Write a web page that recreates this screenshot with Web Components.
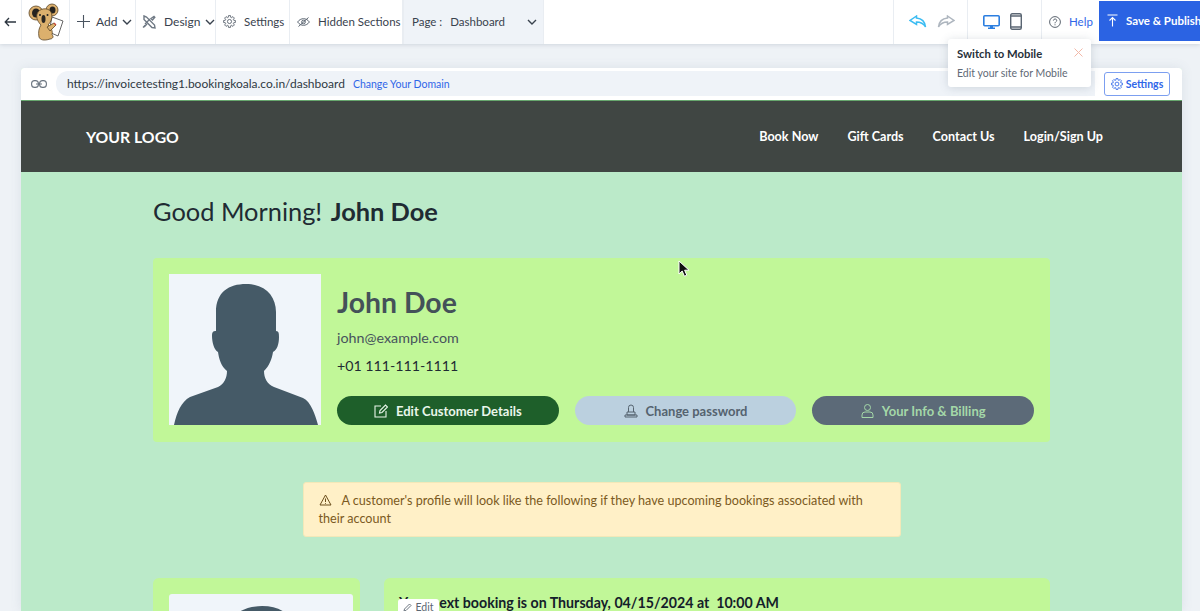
<!DOCTYPE html>
<html>
<head>
<meta charset="utf-8">
<title>Dashboard</title>
<style>
  html, body { margin: 0; height: 611px; overflow: hidden; background: #eef2f6; font-family: Lato, "Liberation Sans", sans-serif; }
</style>
</head>
<body>
<bk-app>
  <bk-toolbar slot="toolbar"></bk-toolbar>
  <bk-tooltip slot="tooltip" heading="Switch to Mobile">Edit your site for Mobile</bk-tooltip>
  <bk-url-bar slot="url" url="https://invoicetesting1.bookingkoala.co.in/dashboard"></bk-url-bar>
  <bk-site-header slot="site"></bk-site-header>
  <bk-dashboard slot="site"></bk-dashboard>
</bk-app>

<script>
const chevron = `<svg width="10" height="6" viewBox="0 0 10 6" fill="none" stroke="#39424e" stroke-width="1.4"><path d="M1 1l4 4 4-4"/></svg>`;

// outline of a gear with 8 teeth, used by both settings buttons
function gear(size, color, sw) {
  let d = '';
  for (let i = 0; i < 8; i++) {
    const a = i * Math.PI / 4;
    const pts = [[-0.3, 8], [-0.17, 11], [0.17, 11], [0.3, 8]];
    pts.forEach(([o, r]) => {
      d += (d ? 'L' : 'M') + (12 + r * Math.sin(a + o)).toFixed(2) + ' ' + (12 - r * Math.cos(a + o)).toFixed(2);
    });
  }
  return `<svg width="${size}" height="${size}" viewBox="0 0 24 24" fill="none" stroke="${color}" stroke-width="${sw}" stroke-linejoin="round"><path d="${d}Z"/><circle cx="12" cy="12" r="3.8"/></svg>`;
}

const avatarPath = 'M5 151C8 138 12 128 21 123L49 113C55 110 58 104 58 97C52 92 50 85 49 78C45 76 43 68 43 62C43 58 44 57 47 57L47 38C47 18 60 10 77 10C96 10 107 22 107 38L107 57C110 57 110 60 110 63C110 70 108 76 104 78C103 85 100 92 95 97C95 104 98 110 105 113L134 124C142 128 146 140 149 151Z';

class App extends HTMLElement {
  constructor() {
    super();
    this.attachShadow({ mode: 'open' });
    this.shadowRoot.innerHTML = `
      <style>
        :host { display: flex; flex-direction: column; position: relative; height: 611px; overflow: hidden; }
        .canvas { flex: 1; min-height: 0; padding: 24px 18px 0 21px; }
        .frame { height: 100%; overflow: hidden; background: #bbeac9; box-shadow: 0 0 12px rgba(90, 110, 130, .12); border-radius: 3px 3px 0 0; }
        ::slotted(bk-tooltip) { position: absolute; left: 948px; top: 39px; }
        .cursor { position: absolute; left: 678px; top: 260px; }
      </style>
      <slot name="toolbar"></slot>
      <div class="canvas">
        <div class="frame">
          <slot name="url"></slot>
          <slot name="site"></slot>
        </div>
      </div>
      <slot name="tooltip"></slot>
      <svg class="cursor" width="13" height="18" viewBox="0 0 13 18"><path d="M1 1v13l3.2-3 2.2 5.2 2.4-1-2.2-5h4.4z" fill="#111" stroke="#fff" stroke-width="1"/></svg>
    `;
  }
}

class Toolbar extends HTMLElement {
  constructor() {
    super();
    this.attachShadow({ mode: 'open' });
    this.shadowRoot.innerHTML = `
      <style>
        :host { display: flex; align-items: stretch; height: 44px; background: #fff; box-shadow: 0 1px 4px rgba(70, 90, 110, .18); position: relative; font-size: 11.5px; color: #39424e; }
        .cell { display: flex; align-items: center; box-sizing: border-box; border-right: 1px solid #e9edf2; white-space: nowrap; padding-bottom: 1px; }
        svg { display: block; flex: none; }
        .back { width: 22px; justify-content: center; }
        .logo { width: 48px; justify-content: center; }
        .add { width: 66px; padding-left: 7px; gap: 6px; font-size: 12px; }
        .add svg:last-child { margin-left: -1px; }
        .design { width: 80px; padding-left: 6px; gap: 8px; font-size: 12px; }
        .design svg:last-child { margin-left: -3px; }
        .settings { width: 74px; padding-left: 7px; gap: 8px; }
        .hidden { width: 113px; padding-left: 7px; gap: 8px; }
        .page { width: 141px; padding: 0 6px 1px 8px; background: #eff3f8; border-left: 1px solid #e9edf2; }
        .page b { font-weight: 400; margin-right: 8px; }
        .page span { flex: 1; }
        .spacer { flex: 1; }
        .history { width: 74px; padding-left: 15px; gap: 10px; }
        .device { width: 74px; padding-left: 15px; gap: 10px; }
        .help { width: 57px; padding-left: 7px; gap: 8px; color: #2f66e8; border-right: 0; font-size: 11.5px; }
        .save { width: 101px; margin: 1px 0 3px; padding-left: 8px; gap: 8px; background: #2b63e3; color: #fff; font-weight: 700; border: 0; overflow: hidden; }
      </style>
      <div class="cell back"><svg width="13" height="10" viewBox="0 0 13 10" fill="none" stroke="#2d3640" stroke-width="1.3"><path d="M12 5H1.2M5 1L1.2 5 5 9"/></svg></div>
      <div class="cell logo">
        <svg width="36" height="38" viewBox="0 0 36 38">
          <path d="M24 14l11 4-5 15-9-4z" fill="#fff" stroke="#555" stroke-width=".9"/>
          <circle cx="8" cy="10" r="7" fill="#dcb06d" stroke="#5a4526" stroke-width=".8"/>
          <circle cx="24" cy="7" r="6" fill="#dcb06d" stroke="#5a4526" stroke-width=".8"/>
          <ellipse cx="8" cy="10" rx="4" ry="4.500" fill="#26231f"/>
          <ellipse cx="24.500" cy="7" rx="3" ry="3.500" fill="#26231f"/>
          <path d="M9 11c2-6 11-7 14-2 2 5 0 10-3 13 3 2 5 6 4 10 2 1 1 4-2 4-6 2-10 1-11-2-1-5 0-9 2-12-3-3-5-7-4-11z" fill="#dcb06d" stroke="#5a4526" stroke-width=".8"/>
          <ellipse cx="15.500" cy="16" rx="2" ry="4" fill="#2b2723"/>
          <circle cx="12" cy="12" r="1" fill="#222"/><circle cx="19.500" cy="12" r="1" fill="#222"/>
          <path d="M19 24l7-4 2 2-6 6z" fill="#dcb06d" stroke="#5a4526" stroke-width=".8"/>
          <path d="M26 20l2 2" stroke="#c9473a" stroke-width="1.200"/>
        </svg>
      </div>
      <div class="cell add"><svg width="13" height="13" viewBox="0 0 13 13" stroke="#4a5460" stroke-width="1.1"><path d="M6.500 0v13M0 6.500h13"/></svg>Add ${chevron}</div>
      <div class="cell design"><svg width="14" height="14" viewBox="0 0 14 14" fill="none" stroke="#6f7984" stroke-width="1.400"><path d="M2 1l2.500 1 8 8 .5 3-3-.5-8-8zM12 1.500l.8.8-2.300 2.700L9 3.500zM5 9l-3 3"/><path d="M1 12.500l2.500-2.500M8 4L3 9"/></svg>Design ${chevron}</div>
      <div class="cell settings">${gear(13, '#4a5460', 1.5)}Settings</div>
      <div class="cell hidden"><svg width="13" height="10" viewBox="0 0 13 10" fill="none" stroke="#5c6672" stroke-width="1"><path d="M.6 5c3-4.400 8.800-4.400 11.800 0-3 4.400-8.800 4.400-11.800 0z"/><circle cx="6.500" cy="5" r="1.800"/><path d="M1.500 9.500L11.500.5"/></svg>Hidden Sections</div>
      <div class="cell page"><b>Page :</b><span>Dashboard</span>${chevron}</div>
      <div class="cell spacer"></div>
      <div class="cell history">
        <svg width="18" height="13" viewBox="0 0 18 13" fill="none" stroke="#3bbcf2" stroke-width="1.500"><path d="M7.500 1L1 5.500 7.500 9.500V7c4 0 7 1.500 9 5-.5-5-3.500-8.500-9-9z"/></svg>
        <svg width="18" height="13" viewBox="0 0 18 13" fill="none" stroke="#aeb6bf" stroke-width="1.500"><path d="M10.500 1L17 5.500 10.500 9.500V7c-4 0-7 1.500-9 5 .5-5 3.500-8.500 9-9z"/></svg>
      </div>
      <div class="cell device">
        <svg width="17" height="14" viewBox="0 0 17 14" fill="none"><rect x=".8" y=".8" width="15.400" height="10" rx="1" stroke="#2b7ee0" stroke-width="1.600"/><path d="M5 12.500h7V14H5z" fill="#2b7ee0"/><path d="M7 11h3v2H7z" fill="#2b7ee0"/></svg>
        <svg width="12" height="17" viewBox="0 0 12 17" fill="none" stroke="#5b6673" stroke-width="1.400"><rect x=".7" y=".7" width="10.600" height="15.600" rx="1.500"/><path d="M.7 3h10.600M.7 14h10.600"/></svg>
      </div>
      <div class="cell help"><svg width="12" height="12" viewBox="0 0 12 12" fill="none" stroke="#4a5460" stroke-width=".9"><circle cx="6" cy="6" r="5.400"/><path d="M4.400 4.600c0-2.100 3.300-2.100 3.300-.1 0 1.300-1.700 1.300-1.700 2.800M6 8.300v1"/></svg>Help</div>
      <div class="cell save"><svg width="11" height="13" viewBox="0 0 11 13" fill="none" stroke="#fff" stroke-width="1.100"><path d="M.5 1h10M5.500 12.500V4M2.500 6.500l3-3 3 3"/></svg>Save &amp; Publish</div>
    `;
  }
}

class Tooltip extends HTMLElement {
  constructor() {
    super();
    this.attachShadow({ mode: 'open' });
    this.shadowRoot.innerHTML = `
      <style>
        :host { display: block; box-sizing: border-box; width: 143px; height: 48px; padding: 8px 9px; background: #fff; border-radius: 3px; box-shadow: 0 1px 10px rgba(70, 90, 110, .2); position: relative; color: #5f6a76; font-size: 10.5px; }
        h4 { margin: 0 0 5px; font-size: 11.3px; line-height: 14px; color: #27303a; font-weight: 700; }
        div { line-height: 14px; white-space: nowrap; }
        svg { position: absolute; right: 8px; top: 9px; }
      </style>
      <h4>${this.getAttribute('heading')}</h4>
      <div><slot></slot></div>
      <svg width="9" height="9" viewBox="0 0 9 9" stroke="#f2b8a8" stroke-width="1" fill="none"><path d="M.5.500l8 8M8.500.500l-8 8"/></svg>
    `;
  }
}

class UrlBar extends HTMLElement {
  constructor() {
    super();
    this.attachShadow({ mode: 'open' });
    this.shadowRoot.innerHTML = `
      <style>
        :host { display: flex; align-items: center; box-sizing: border-box; height: 33px; padding: 0 12px 1px 0; background: #fff; border-bottom: 1px solid #67a76e; font-size: 12px; color: #2f3943; }
        .chain { width: 35px; display: flex; justify-content: center; }
        .pill { flex: 1; height: 25px; margin-right: 9px; padding-left: 11px; display: flex; align-items: center; gap: 8px; background: #eff3f8; border-radius: 12px 0 0 12px; white-space: nowrap; }
        a { color: #2f66e8; font-size: 10.5px; }
        button { box-sizing: border-box; width: 66px; height: 24px; padding: 0; display: flex; align-items: center; justify-content: center; gap: 3px; background: #fff; border: 1px solid #7c9ff0; border-radius: 3px; color: #2f66e8; font: 700 10.5px Lato, sans-serif; }
      </style>
      <div class="chain"><svg width="16" height="8" viewBox="0 0 16 8" fill="none" stroke="#6b7580" stroke-width="1.100"><rect x=".6" y=".6" width="6.800" height="6.800" rx="3"/><rect x="8.600" y=".6" width="6.800" height="6.800" rx="3"/><path d="M5 4h6"/></svg></div>
      <div class="pill"><span>${this.getAttribute('url')}</span><a>Change Your Domain</a></div>
      <button>${gear(12, '#2f66e8', 1.7)}Settings</button>
    `;
  }
}

class SiteHeader extends HTMLElement {
  constructor() {
    super();
    this.attachShadow({ mode: 'open' });
    this.shadowRoot.innerHTML = `
      <style>
        :host { display: flex; align-items: center; justify-content: space-between; box-sizing: border-box; height: 71px; padding: 0 79px 0 65px; background: #404643; color: #fff; }
        .logo { font-size: 15.8px; font-weight: 700; }
        nav { display: flex; gap: 29px; font-size: 12.6px; font-weight: 700; }
      </style>
      <div class="logo">YOUR LOGO</div>
      <nav><span>Book Now</span><span>Gift Cards</span><span>Contact Us</span><span>Login/Sign Up</span></nav>
    `;
  }
}

class Pill extends HTMLElement {
  constructor() {
    super();
    this.attachShadow({ mode: 'open' });
    this.shadowRoot.innerHTML = `
      <style>
        :host { display: flex; flex: 1; align-items: center; justify-content: center; gap: 8px; height: 29px; border-radius: 15px; background: var(--pill-bg); color: var(--pill-fg); font-size: 13px; font-weight: 700; white-space: nowrap; }
      </style>
      <slot name="icon"></slot><slot></slot>
    `;
  }
}

class Alert extends HTMLElement {
  constructor() {
    super();
    this.attachShadow({ mode: 'open' });
    this.shadowRoot.innerHTML = `
      <style>
        :host { display: block; box-sizing: border-box; width: 598px; margin: 0 auto; padding: 9px 15px; background: #fff0c7; border: 1px solid #f3e8b8; border-radius: 3px; color: #7b5a22; font-size: 12.6px; line-height: 17.5px; }
        svg { vertical-align: -1px; margin-right: 10px; }
      </style>
      <svg width="13" height="12" viewBox="0 0 13 12" fill="none" stroke="#6b4e1c" stroke-width="1"><path d="M6.500 1L12 11H1zM6.500 4.500v3.500M6.500 9v.8"/></svg><slot></slot>
    `;
  }
}

class Dashboard extends HTMLElement {
  constructor() {
    super();
    this.attachShadow({ mode: 'open' });
    this.shadowRoot.innerHTML = `
      <style>
        :host { display: block; box-sizing: border-box; width: 897px; margin-left: 132px; padding-top: 23px; color: #1f2b33; }
        h1 { margin: 0 0 31px; height: 32px; font-size: 25.4px; line-height: 32px; font-weight: 400; }
        h1 b { margin-left: 2px; font-weight: 700; }
        .profile { display: flex; gap: 16px; box-sizing: border-box; height: 184px; padding: 16px; margin-bottom: 40px; background: #c1f798; border-radius: 4px; }
        .avatar { flex: none; width: 152px; height: 151px; background: #f0f5fa; display: block; }
        .info { flex: 1; min-width: 0; }
        h2 { margin: 10px 0 9px; font-size: 28.4px; line-height: 36px; color: #445159; font-weight: 700; }
        .email { font-size: 14.3px; line-height: 18px; color: #47535c; margin-bottom: 10px; }
        .phone { font-size: 14.2px; line-height: 18px; color: #1f2b33; margin-bottom: 21px; }
        .actions { display: flex; gap: 16px; }
        .edit { --pill-bg: #1e5f2a; --pill-fg: #e9f6ea; }
        .pass { --pill-bg: #bbd0df; --pill-fg: #55636f; }
        .bill { --pill-bg: #5c6a78; --pill-fg: #a4d8a8; }
        .lower { display: flex; gap: 24px; margin-top: 41px; }
        .side { flex: none; box-sizing: border-box; width: 207px; height: 180px; padding: 16px 7px 0 16px; background: #c1f798; border-radius: 6px; }
        .side div { height: 150px; background: #f0f5fa; border-radius: 3px; overflow: hidden; }
        .side svg { display: block; width: 184px; }
        .main { flex: 1; height: 180px; padding: 16px 15px; background: #c1f798; border-radius: 6px; position: relative; font-size: 14.2px; font-weight: 700; color: #14202a; line-height: 18px; }
        .edit-tag { position: absolute; left: 14px; top: 21px; width: 41px; height: 20px; padding-top: 2px; box-sizing: border-box; display: flex; gap: 3px; align-items: flex-start; justify-content: center; background: #fff; border-radius: 3px 3px 0 0; color: #5c6672; font-size: 10.500px; line-height: 12px; font-weight: 400; }
        .edit-tag svg { margin-top: 2px; }
      </style>
      <h1>Good Morning! <b>John Doe</b></h1>
      <section class="profile">
        <svg class="avatar" viewBox="0 0 152 151"><path fill="#455a67" d="${avatarPath}"/></svg>
        <div class="info">
          <h2>John Doe</h2>
          <div class="email">john@example.com</div>
          <div class="phone">+01 111-111-1111</div>
          <div class="actions">
            <bk-pill class="edit"><svg slot="icon" width="14" height="14" viewBox="0 0 14 14" fill="none" stroke="#e9f6ea" stroke-width="1.100"><path d="M7 2H1v11h11V7"/><path d="M5.500 9l.5-2.500 5.500-5.500 2 2-5.500 5.500z"/></svg>Edit Customer Details</bk-pill>
            <bk-pill class="pass"><svg slot="icon" width="14" height="14" viewBox="0 0 14 14" fill="none" stroke="#55636f" stroke-width="1"><path d="M4.500 8V3.500a2.500 2.500 0 0 1 5 0V8M3 8h8v3H3zM1 13h12v-2H1z"/></svg>Change password</bk-pill>
            <bk-pill class="bill"><svg slot="icon" width="13" height="14" viewBox="0 0 13 14" fill="none" stroke="#a4d8a8" stroke-width="1"><circle cx="6.500" cy="3.500" r="3"/><path d="M1 13.500v-2.500a3 3 0 0 1 3-3h5a3 3 0 0 1 3 3v2.500z"/></svg>Your Info &amp; Billing</bk-pill>
          </div>
        </div>
      </section>
      <bk-alert>A customer's profile will look like the following if they have upcoming bookings associated with their account</bk-alert>
      <div class="lower">
        <div class="side"><div><svg viewBox="0 0 152 151"><path fill="#455a67" d="${avatarPath}"/></svg></div></div>
        <div class="main">Your next booking is on Thursday, 04/15/2024 at &nbsp;10:00 AM
          <span class="edit-tag"><svg width="9" height="9" viewBox="0 0 9 9" fill="none" stroke="#5c6672" stroke-width=".9"><path d="M1 8l.5-2L6.500 1 8 2.500 3 7.500z"/></svg>Edit</span>
        </div>
      </div>
    `;
  }
}

customElements.define('bk-app', App);
customElements.define('bk-toolbar', Toolbar);
customElements.define('bk-tooltip', Tooltip);
customElements.define('bk-url-bar', UrlBar);
customElements.define('bk-site-header', SiteHeader);
customElements.define('bk-pill', Pill);
customElements.define('bk-alert', Alert);
customElements.define('bk-dashboard', Dashboard);
</script>
</body>
</html>
